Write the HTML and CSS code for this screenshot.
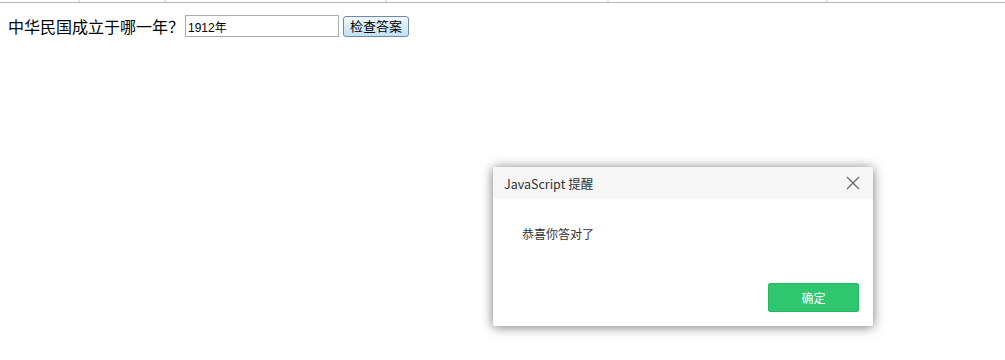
FILE: index.html
```html
<!DOCTYPE html>
<html lang="zh-CN">
<head>
    <meta charset="UTF-8">
    <title>问答</title>
    <link rel="stylesheet" href="styles.css">
</head>
<body>
    <div class="topbar">
        <span class="cell w78"></span>
        <span class="cell w86"></span>
        <span class="cell w221"></span>
        <span class="cell w222"></span>
        <span class="cell w219"></span>
    </div>

    <form class="quiz" onsubmit="return false">
        <label for="answer">中华民国成立于哪一年？</label>
        <input type="text" id="answer" value="1912年">
        <button type="button" class="check">检查答案</button>
    </form>

    <!-- alert dialog -->
    <div class="dialog">
        <div class="dialog-head">
            <span>JavaScript 提醒</span>
            <svg class="close" width="14" height="14" viewBox="0 0 14 14">
                <path d="M1 1 L13 13 M13 1 L1 13" stroke="#666" stroke-width="1.2" fill="none"/>
            </svg>
        </div>
        <div class="dialog-body">恭喜你答对了</div>
        <div class="dialog-foot">
            <button type="button" class="ok">确定</button>
        </div>
    </div>
</body>
</html>
```

FILE: styles.css
```css
/* Base */
* {
    box-sizing: border-box;
}

body {
    margin: 0;
    background: #fff;
    color: #000;
    font-family: "Noto Sans CJK SC", "Liberation Sans", sans-serif;
}

.topbar {
    display: flex;
    height: 3px;
    border-bottom: 1px solid #b4b4b4;
}

.cell {
    height: 2px;
    border-right: 2px solid #e4e4e4;
}

.w78 { width: 80px; }
.w86 { width: 86px; }
.w221 { width: 221px; }
.w222 { width: 222px; }
.w219 { width: 219px; }

/* Question row */
.quiz {
    display: flex;
    align-items: center;
    padding: 12px 8px 0;
}

.quiz label {
    font-size: 16px;
    line-height: 22px;
}

.quiz input {
    width: 154px;
    height: 22px;
    margin-left: 1px;
    padding: 1px 2px;
    border: 1px solid #a5acb2;
    font-family: "Liberation Sans", "Noto Sans CJK SC", sans-serif;
    font-size: 12px;
    color: #000;
}

.check {
    height: 21px;
    margin-left: 4px;
    padding: 0 6px;
    border: 1px solid #6c8bab;
    border-radius: 3px;
    background: linear-gradient(#f3f9fe, #d6ebf8 50%, #c3e0f3);
    font-family: "Noto Sans CJK SC", sans-serif;
    font-size: 13px;
    line-height: 18px;
    color: #000;
}

/* Alert dialog */
.dialog {
    position: absolute;
    left: 493px;
    top: 167px;
    width: 380px;
    height: 159px;
    background: #fff;
    border-radius: 2px;
    box-shadow: 0 1px 12px rgba(0, 0, 0, 0.55);
    display: flex;
    flex-direction: column;
}

.dialog-head {
    height: 32px;
    padding: 0 11px;
    background: #f6f6f6;
    display: flex;
    align-items: center;
    justify-content: space-between;
    font-size: 12.5px;
    color: #333;
}

.close {
    margin-right: 2px;
}

.dialog-body {
    padding: 26px 29px 0;
    font-size: 12px;
    color: #333;
}

.dialog-foot {
    margin-top: auto;
    padding: 0 14px 14px;
    display: flex;
    justify-content: flex-end;
}

.ok {
    width: 91px;
    height: 29px;
    border: 1px solid #27b863;
    border-radius: 2px;
    background: #2ec770;
    color: #fff;
    font-family: "Noto Sans CJK SC", sans-serif;
    font-size: 12px;
}
```
